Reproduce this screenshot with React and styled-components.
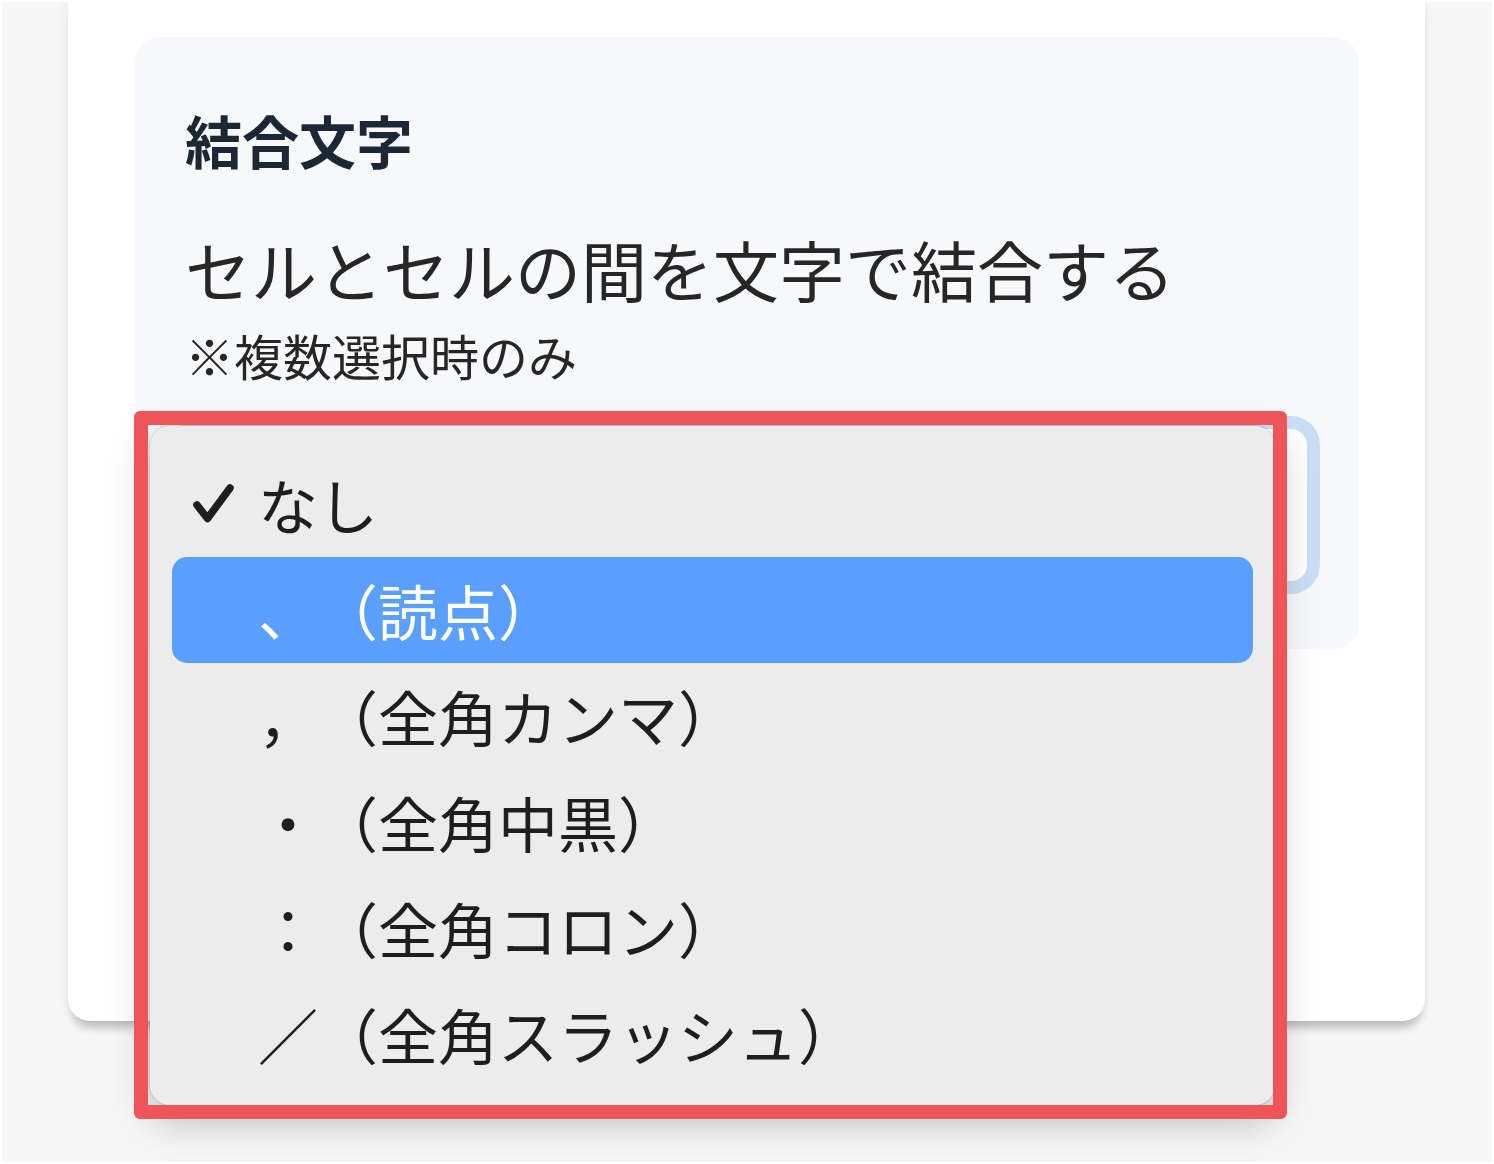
import React from 'react';
import styled, { createGlobalStyle } from 'styled-components';

const Global = createGlobalStyle`
  html, body { margin: 0; padding: 0; background: #ffffff; }
  body {
    font-family: "Noto Sans CJK JP", "Noto Sans", sans-serif;
    text-spacing-trim: space-all;
    -webkit-font-smoothing: antialiased;
  }
  * { box-sizing: border-box; }
`;

const Page = styled.div`
  margin: 2px;
  height: 1160px;
  background: #f7f7f7;
  padding: 0 67px 0 66px;
  overflow: hidden;
`;

const Card = styled.div`
  background: #ffffff;
  border-radius: 0 0 22px 22px;
  box-shadow: 0 12px 10px -5px rgba(0, 0, 0, 0.22), 0 0 12px rgba(0, 0, 0, 0.08);
  padding: 35px 66px 372px 67px;
`;

const Panel = styled.section`
  background: #f7f8fa;
  border-radius: 26px;
  padding: 68px 52px 68px 50px;
`;

const Heading = styled.h2`
  margin: 0;
  font-size: 57px;
  line-height: 68px;
  font-weight: 700;
  color: #1c2736;
`;

const Description = styled.p`
  margin: 56px 0 0;
  font-size: 66px;
  line-height: 78px;
  font-weight: 400;
  color: #262626;
`;

const Note = styled.p`
  margin: 19px 0 0;
  font-size: 49px;
  line-height: 58px;
  color: #262626;
`;

const SelectWrap = styled.div`
  position: relative;
  margin-top: 45px;
`;

const SelectBox = styled.div`
  height: 152px;
  background: #fdfdfd;
  border-radius: 16px;
  box-shadow: 0 0 0 13px #c9def4;
`;

const Menu = styled.ul`
  position: absolute;
  top: -3px;
  left: -35px;
  width: 1125px;
  margin: 0;
  list-style: none;
  padding: 25px 22px 18px;
  background: #ececec;
  border-radius: 20px;
  box-shadow: 0 0 0 1px rgba(0, 0, 0, 0.1), 0 16px 40px rgba(0, 0, 0, 0.26);
  z-index: 2;
`;

const Item = styled.li`
  display: flex;
  align-items: center;
  height: 106px;
  padding-left: 20px;
  border-radius: 15px;
  font-size: 60px;
  line-height: 1;
  color: ${(p) => (p.$active ? '#ffffff' : '#1e1e1e')};
  background: ${(p) => (p.$active ? '#5a9ffe' : 'transparent')};
  white-space: pre;
`;

const CheckSlot = styled.span`
  flex: none;
  width: 66px;
  height: 42px;
  display: flex;
  align-items: center;
`;

const Label = styled.span`
  display: block;
`;

const Annotation = styled.div`
  position: absolute;
  top: -18px;
  left: -51px;
  width: 1153px;
  height: 708px;
  border: 14px solid #ef5558;
  border-radius: 6px;
  pointer-events: none;
  z-index: 3;
`;

const Check = () => (
  <svg width="43" height="42" viewBox="0 0 43 42" aria-hidden="true">
    <path
      d="M5 22 L15.5 35.5 L38 5"
      fill="none"
      stroke="#1e1e1e"
      strokeWidth="7.5"
      strokeLinecap="round"
      strokeLinejoin="round"
    />
  </svg>
);

const options = [
  { label: 'なし', checked: true },
  { label: '、（読点）', active: true },
  { label: '，（全角カンマ）' },
  { label: '・（全角中黒）' },
  { label: '：（全角コロン）' },
  { label: '／（全角スラッシュ）' },
];

export default function App() {
  return (
    <>
      <Global />
      <Page>
        <Card>
          <Panel>
            <Heading>結合文字</Heading>
            <Description>セルとセルの間を文字で結合する</Description>
            <Note>※複数選択時のみ</Note>
            <SelectWrap>
              <SelectBox />
              <Menu>
                {options.map((o) => (
                  <Item key={o.label} $active={o.active}>
                    <CheckSlot>{o.checked ? <Check /> : null}</CheckSlot>
                    <Label>{o.label}</Label>
                  </Item>
                ))}
              </Menu>
              <Annotation />
            </SelectWrap>
          </Panel>
        </Card>
      </Page>
    </>
  );
}
